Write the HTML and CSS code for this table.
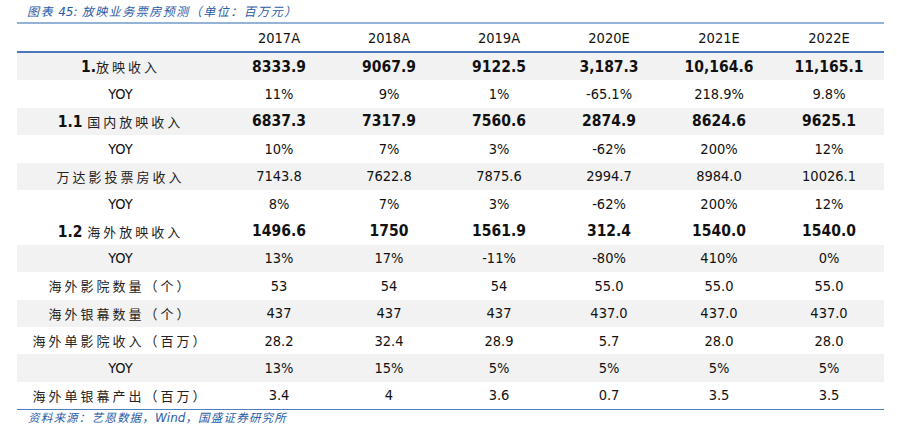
FILE: index.html
```html
<!DOCTYPE html>
<html lang="zh">
<head>
<meta charset="utf-8">
<link rel="stylesheet" href="styles.css">
</head>
<body>
<div class="page">
  <div class="caption">图表 <span class="lat">45:</span> 放映业务票房预测（单位：百万元）</div>
  <table class="tbl">
    <colgroup>
      <col class="c-label"><col class="c-num"><col class="c-num"><col class="c-num"><col class="c-num"><col class="c-num"><col class="c-num">
    </colgroup>
    <thead>
      <tr><th></th><th>2017A</th><th>2018A</th><th>2019A</th><th>2020E</th><th>2021E</th><th>2022E</th></tr>
    </thead>
    <tbody>
      <tr class="shade strong"><td class="lbl"><b>1.</b><span class="cn">放映收入</span></td><td>8333.9</td><td>9067.9</td><td>9122.5</td><td>3,187.3</td><td>10,164.6</td><td>11,165.1</td></tr>
      <tr><td class="lbl">YOY</td><td>11%</td><td>9%</td><td>1%</td><td>-65.1%</td><td>218.9%</td><td>9.8%</td></tr>
      <tr class="shade strong"><td class="lbl"><b>1.1</b> <span class="cn">国内放映收入</span></td><td>6837.3</td><td>7317.9</td><td>7560.6</td><td>2874.9</td><td>8624.6</td><td>9625.1</td></tr>
      <tr><td class="lbl">YOY</td><td>10%</td><td>7%</td><td>3%</td><td>-62%</td><td>200%</td><td>12%</td></tr>
      <tr class="shade"><td class="lbl"><span class="cn">万达影投票房收入</span></td><td>7143.8</td><td>7622.8</td><td>7875.6</td><td>2994.7</td><td>8984.0</td><td>10026.1</td></tr>
      <tr><td class="lbl">YOY</td><td>8%</td><td>7%</td><td>3%</td><td>-62%</td><td>200%</td><td>12%</td></tr>
      <tr class="strong"><td class="lbl"><b>1.2</b> <span class="cn">海外放映收入</span></td><td>1496.6</td><td>1750</td><td>1561.9</td><td>312.4</td><td>1540.0</td><td>1540.0</td></tr>
      <tr class="shade"><td class="lbl">YOY</td><td>13%</td><td>17%</td><td>-11%</td><td>-80%</td><td>410%</td><td>0%</td></tr>
      <tr><td class="lbl"><span class="cn">海外影院数量（个）</span></td><td>53</td><td>54</td><td>54</td><td>55.0</td><td>55.0</td><td>55.0</td></tr>
      <tr class="shade"><td class="lbl"><span class="cn">海外银幕数量（个）</span></td><td>437</td><td>437</td><td>437</td><td>437.0</td><td>437.0</td><td>437.0</td></tr>
      <tr><td class="lbl"><span class="cn">海外单影院收入（百万）</span></td><td>28.2</td><td>32.4</td><td>28.9</td><td>5.7</td><td>28.0</td><td>28.0</td></tr>
      <tr class="shade"><td class="lbl">YOY</td><td>13%</td><td>15%</td><td>5%</td><td>5%</td><td>5%</td><td>5%</td></tr>
      <tr><td class="lbl"><span class="cn">海外单银幕产出（百万）</span></td><td>3.4</td><td>4</td><td>3.6</td><td>0.7</td><td>3.5</td><td>3.5</td></tr>
    </tbody>
  </table>
  <div class="source">资料来源：艺恩数据，<span class="lat">Wind</span>，国盛证券研究所</div>
</div>
</body>
</html>
```
FILE: styles.css
```css
html, body {
  margin: 0;
  padding: 0;
  background: #ffffff;
}
.page {
  width: 897px;
  height: 441px;
  padding-left: 17px;
  box-sizing: border-box;
}
.caption {
  height: 22px;
  line-height: 22px;
  padding-left: 10px;
  font-family: "Noto Sans CJK SC", sans-serif;
  font-style: italic;
  font-size: 12px;
  letter-spacing: 1.5px;
  color: #2a5ba8;
}
.caption .lat,
.source .lat {
  font-family: "DejaVu Sans", "Noto Sans CJK SC", sans-serif;
  font-size: 12px;
  letter-spacing: 0;
}
.tbl {
  width: 867px;
  border-collapse: collapse;
  table-layout: fixed;
  border-top: 2px solid #95b3d7;
  border-bottom: 1px solid #4f7fbf;
  font-family: "DejaVu Sans Condensed", "DejaVu Sans", "Noto Sans CJK SC", sans-serif;
  font-stretch: condensed;
  font-size: 14.5px;
  color: #111;
}
.c-label { width: 207px; }
.c-num { width: 110px; }
.tbl th {
  height: 27px;
  padding: 0;
  font-weight: normal;
  text-align: center;
  border-bottom: 2px solid #4a78bb;
}
.tbl td {
  height: 27.4px;
  padding: 0;
  text-align: center;
  white-space: nowrap;
}
.tbl tr.shade td {
  background: #f2f2f2;
}
.tbl tr.strong td {
  font-weight: bold;
  font-size: 15.5px;
}
.cn {
  font-family: "Noto Sans CJK SC", sans-serif;
  font-stretch: normal;
  font-weight: normal;
  font-size: 13px;
  letter-spacing: 3px;
  color: #222;
}
.tbl tr.strong .cn {
  font-weight: normal;
  font-size: 13px;
}
.source {
  padding-left: 11px;
  height: 16px;
  line-height: 14px;
  font-family: "Noto Sans CJK SC", sans-serif;
  font-style: italic;
  font-size: 11.5px;
  letter-spacing: 1.2px;
  color: #2a5ba8;
}
```
